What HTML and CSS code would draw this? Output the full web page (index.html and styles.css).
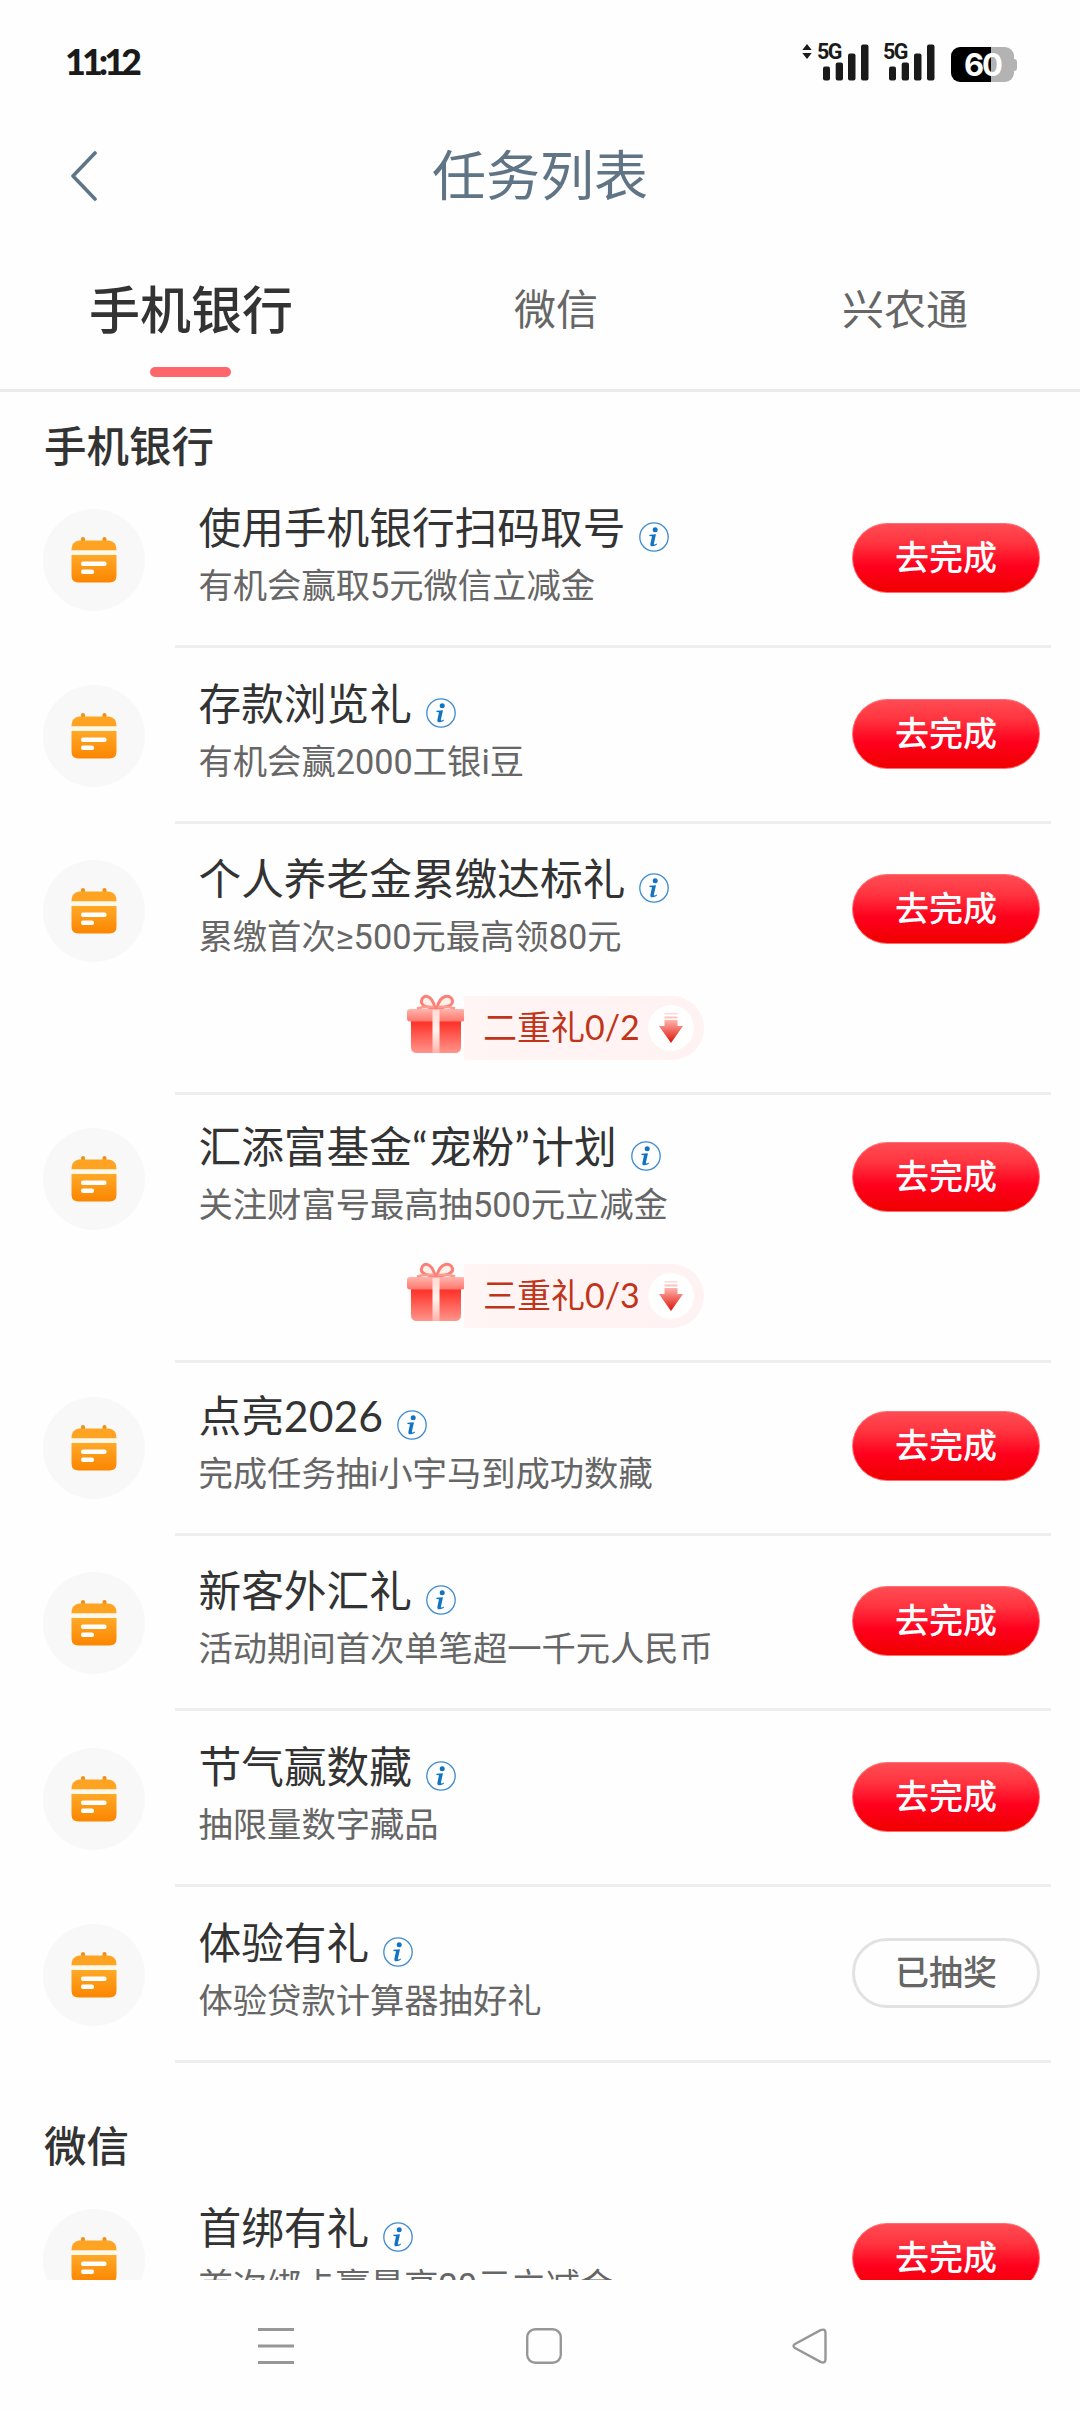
FILE: index.html
```html
<!DOCTYPE html>
<html lang="zh-CN">
<head>
<meta charset="utf-8">
<title>任务列表</title>
<link rel="stylesheet" href="styles.css">
</head>
<body>
<svg class="defs" width="0" height="0" aria-hidden="true">
  <defs>
    <linearGradient id="orange" x1="0" y1="0" x2="0" y2="1"><stop offset="0" stop-color="#ffa928"/><stop offset="1" stop-color="#fb8500"/></linearGradient>
    <linearGradient id="lid" x1="0" y1="0" x2="0" y2="1"><stop offset="0" stop-color="#ffb5ad"/><stop offset="1" stop-color="#ff766c"/></linearGradient>
    <linearGradient id="box" x1="0" y1="0" x2="0" y2="1"><stop offset="0" stop-color="#fb2f25"/><stop offset=".35" stop-color="#ff5148"/><stop offset="1" stop-color="#ff958b"/></linearGradient>
    <linearGradient id="ribbon" x1="0" y1="0" x2="0" y2="1"><stop offset="0" stop-color="#ffd9d2"/><stop offset=".5" stop-color="#fff3ef"/><stop offset="1" stop-color="#ffb3aa"/></linearGradient>
    <linearGradient id="down" x1="0" y1="0" x2="0" y2="1"><stop offset="0" stop-color="#ffb3ac"/><stop offset="1" stop-color="#dc1206"/></linearGradient>
  </defs>
  <symbol id="calendar" viewBox="0 0 46 46">
    <rect x="10" y="0" width="4" height="8" rx="2" fill="#ef8f1c"/><rect x="31.500" y="0" width="4" height="8" rx="2" fill="#ef8f1c"/>
    <path d="M8 3.500H38Q45.500 4.500 45.500 13.500H.500Q.500 4.500 8 3.500Z" fill="#ffa323"/>
    <path d="M.5 18H45.500V38.500Q45.500 45.500 38.500 45.500H7.500Q.5 45.500 .5 38.500Z" fill="url(#orange)"/>
    <rect x=".5" y="13.500" width="45" height="4.500" fill="#fff8e6"/>
    <rect x="10" y="24.500" width="25.500" height="4.600" rx="2" fill="#fff"/><rect x="10" y="32.500" width="13" height="4.600" rx="2" fill="#fff"/>
  </symbol>
  <symbol id="info" viewBox="0 0 30 30">
    <circle cx="15" cy="15" r="14.200" fill="none" stroke="#3d8ad0" stroke-width="1.300"/>
    <circle cx="16.200" cy="7.800" r="2.500" fill="#1173c4"/>
    <path d="M10.600 12.800L17 12.200L14.800 22Q14.700 23.200 18 21.600L17.600 23Q10.800 26.200 11.400 21.800L13 14.300L10.300 14Z" fill="#1173c4"/>
  </symbol>
  <symbol id="gift" viewBox="0 0 60 61">
    <path d="M5 27H55V53Q55 59 49 59H11Q5 59 5 53Z" fill="url(#box)"/>
    <rect x="1" y="15" width="58" height="12.500" rx="3" fill="url(#lid)"/>
    <rect x="26.500" y="15" width="7" height="44" fill="url(#ribbon)"/>
    <path d="M29 14C23 14 14 12 15.500 6.500C17 0 26 0 29 14ZM31 14C37 14 48 12 46.500 6.500C45 0 34 0 31 14Z" fill="#fff0ea" stroke="#fb8178" stroke-width="3"/>
    <path d="M28 13Q18 12 11 14.500M32 13Q42 12 49 14.500" fill="none" stroke="#fc9b91" stroke-width="2.500"/>
  </symbol>
  <symbol id="arrow" viewBox="0 0 24 32">
    <rect x="5.500" y="1" width="13" height="1.500" fill="#ffd9d5"/><rect x="5.500" y="4.500" width="13" height="2" fill="#ffc2bd"/>
    <path d="M5.500 8H18.500V14H24L12 31L0 14H5.500Z" fill="url(#down)"/>
  </symbol>
  <symbol id="signal" viewBox="0 0 46 36">
    <rect x="0" y="22" width="7" height="14" rx="2"/><rect x="12.700" y="18" width="7.300" height="18" rx="2"/><rect x="25" y="9" width="7.500" height="27" rx="2"/><rect x="38" y="0" width="7.500" height="36" rx="2"/>
  </symbol>
</svg>

<header class="status">
  <span class="clock">11:12</span>
  <div class="status-icons">
    <svg class="updown" viewBox="0 0 10 16"><path d="M5 0L10 6.300H0ZM5 16L10 9.700H0Z" fill="#1a1a1a"/></svg>
    <div class="cell"><span class="net">5G</span><svg class="bars"><use href="#signal"/></svg></div>
    <div class="cell"><span class="net">5G</span><svg class="bars"><use href="#signal"/></svg></div>
    <div class="battery"><span class="level">60</span></div><i class="nub"></i>
  </div>
</header>

<nav class="titlebar">
  <svg class="back" viewBox="0 0 28 50"><path d="M25 2L3 25L25 48" fill="none" stroke="#5f7485" stroke-width="3.600" stroke-linecap="round" stroke-linejoin="round"/></svg>
  <h1>任务列表</h1>
</nav>

<div class="tabs">
  <div class="tab active">手机银行</div>
  <div class="tab second">微信</div>
  <div class="tab third">兴农通</div>
</div>

<main class="content">
  <h2>手机银行</h2>
  <section class="list">
    <article class="item">
      <div class="row">
        <div class="icon"><svg><use href="#calendar"/></svg></div>
        <div class="copy"><h3>使用手机银行扫码取号<svg class="info"><use href="#info"/></svg></h3><p>有机会赢取5元微信立减金</p></div>
        <button class="btn">去完成</button>
      </div>
    </article>
    <article class="item">
      <div class="row">
        <div class="icon"><svg><use href="#calendar"/></svg></div>
        <div class="copy"><h3>存款浏览礼<svg class="info"><use href="#info"/></svg></h3><p>有机会赢2000工银i豆</p></div>
        <button class="btn">去完成</button>
      </div>
    </article>
    <article class="item rewarded">
      <div class="row">
        <div class="icon"><svg><use href="#calendar"/></svg></div>
        <div class="copy"><h3>个人养老金累缴达标礼<svg class="info"><use href="#info"/></svg></h3><p>累缴首次≥500元最高领80元</p></div>
        <button class="btn">去完成</button>
      </div>
      <div class="reward"><svg class="gift"><use href="#gift"/></svg><div class="pill"><span>二重礼0/2</span><b class="more"><svg><use href="#arrow"/></svg></b></div></div>
    </article>
    <article class="item rewarded">
      <div class="row">
        <div class="icon"><svg><use href="#calendar"/></svg></div>
        <div class="copy"><h3>汇添富基金<span class="quote">“</span>宠粉<span class="quote">”</span>计划<svg class="info"><use href="#info"/></svg></h3><p>关注财富号最高抽500元立减金</p></div>
        <button class="btn">去完成</button>
      </div>
      <div class="reward"><svg class="gift"><use href="#gift"/></svg><div class="pill"><span>三重礼0/3</span><b class="more"><svg><use href="#arrow"/></svg></b></div></div>
    </article>
    <article class="item">
      <div class="row">
        <div class="icon"><svg><use href="#calendar"/></svg></div>
        <div class="copy"><h3>点亮2026<svg class="info"><use href="#info"/></svg></h3><p>完成任务抽i小宇马到成功数藏</p></div>
        <button class="btn">去完成</button>
      </div>
    </article>
    <article class="item">
      <div class="row">
        <div class="icon"><svg><use href="#calendar"/></svg></div>
        <div class="copy"><h3>新客外汇礼<svg class="info"><use href="#info"/></svg></h3><p>活动期间首次单笔超一千元人民币</p></div>
        <button class="btn">去完成</button>
      </div>
    </article>
    <article class="item">
      <div class="row">
        <div class="icon"><svg><use href="#calendar"/></svg></div>
        <div class="copy"><h3>节气赢数藏<svg class="info"><use href="#info"/></svg></h3><p>抽限量数字藏品</p></div>
        <button class="btn">去完成</button>
      </div>
    </article>
    <article class="item">
      <div class="row">
        <div class="icon"><svg><use href="#calendar"/></svg></div>
        <div class="copy"><h3>体验有礼<svg class="info"><use href="#info"/></svg></h3><p>体验贷款计算器抽好礼</p></div>
        <button class="btn done">已抽奖</button>
      </div>
    </article>
  </section>
  <h2 class="next">微信</h2>
  <section class="list">
    <article class="item">
      <div class="row">
        <div class="icon"><svg><use href="#calendar"/></svg></div>
        <div class="copy"><h3>首绑有礼<svg class="info"><use href="#info"/></svg></h3><p>首次绑卡赢最高20元立减金</p></div>
        <button class="btn">去完成</button>
      </div>
    </article>
  </section>
</main>

<footer class="sysnav">
  <svg width="36" height="36" viewBox="0 0 36 36"><path d="M0 1.500H36M0 18H36M0 34.500H36" stroke="#979797" stroke-width="3"/></svg>
  <svg width="36" height="36" viewBox="0 0 36 36"><rect x="1.200" y="1.200" width="33.600" height="33.600" rx="8" fill="none" stroke="#979797" stroke-width="2.400"/></svg>
  <svg width="36" height="36" viewBox="0 0 36 36"><path d="M3 16L28.500 2.200Q33.500 .2 33.500 5V31Q33.500 36 28.500 33.800L3 20Q0 18 3 16Z" fill="none" stroke="#979797" stroke-width="2.400"/></svg>
</footer>
</body>
</html>
```
FILE: styles.css
```css
* { box-sizing: border-box; margin: 0; padding: 0; }
body {
  width: 1080px;
  height: 2412px;
  overflow: hidden;
  display: flex;
  flex-direction: column;
  background: #fefefe;
  color: #333;
  font-family: "Noto Sans CJK SC", sans-serif;
}
.defs { position: absolute; }
svg { display: block; }
h1, h2, h3 { font-weight: 400; }

.status {
  flex: none;
  height: 124px;
  padding: 44px 63px 0 65px;
  display: flex;
  justify-content: space-between;
}
.clock {
  font: 900 36px/34px Lato, sans-serif;
  color: #1a1a1a;
  letter-spacing: -4px;
}
.status-icons { display: flex; align-items: flex-start; }
.updown { width: 10px; height: 15px; margin-right: 5px; }
.cell { display: grid; width: 66px; }
.net, .bars { grid-area: 1 / 1; }
.net {
  font: 700 21.500px/16px Roboto, sans-serif;
  letter-spacing: -1.500px;
  color: #1a1a1a;
}
.bars { width: 46px; height: 37px; margin-left: 5.500px; fill: #1a1a1a; }
.battery {
  width: 63px;
  height: 35px;
  margin: 3px 0 0 2px;
  border-radius: 9px;
  background: linear-gradient(90deg, #000 63.5%, #b3b3b3 63.5%);
  display: flex;
  justify-content: center;
}
.level { font: 700 31px/35px Inter, sans-serif; letter-spacing: -2px; color: #fff; }
.nub { width: 3px; height: 12px; margin-top: 15px; border-radius: 0 3px 3px 0; background: #b3b3b3; }

.titlebar {
  flex: none;
  height: 102px;
  display: grid;
  grid-template-columns: 70px 1fr 70px;
  align-items: center;
}
.back { width: 28px; height: 50px; margin: 2px 0 0 70px; }
.titlebar h1 { text-align: center; font-size: 54px; line-height: 60px; padding-bottom: 5px; color: #5f7485; }

.tabs {
  flex: none;
  height: 166px;
  border-bottom: 3px solid #ebebeb;
  display: grid;
  grid-template-columns: 382px 348px 350px;
  justify-items: center;
  color: #666;
  font-size: 42px;
  line-height: 60px;
  padding-top: 51px;
}
.tab.active { color: #333; font-size: 51px; font-weight: 500; }
.tab.active::after {
  content: "";
  display: block;
  width: 81px;
  height: 10px;
  margin: 30px auto 0;
  border-radius: 5px;
  background: #ff666b;
}

.content { flex: none; height: 1888px; overflow: hidden; padding: 31px 0 0; }
h2 { font-size: 42.500px; line-height: 42px; font-weight: 500; margin: 0 0 43px 44px; }
h2.next { margin-top: 60px; }

.item { padding: 35.700px 0 0; }
.item:first-child { padding-top: 0; }
.rewarded + .item { padding-top: 32.500px; }
.item::after {
  content: "";
  display: block;
  height: 3px;
  margin: 39px 29px 0 175px;
  background: #eee;
}
.rewarded::after { margin-top: 31.600px; }
.row { display: flex; height: 98px; padding: 0 40px 0 43px; }
.icon {
  flex: none;
  width: 102px;
  height: 102px;
  margin: 1px 53.500px 0 0;
  border-radius: 50%;
  background: #f8f8f8;
  display: grid;
  place-items: center;
}
.icon svg { width: 46px; height: 46px; }
.copy { flex: 1; }
.copy h3 {
  display: flex;
  height: 42px;
  font-size: 42.700px;
  line-height: 40px;
  font-family: Lato, "Noto Sans CJK SC", sans-serif;
}
.quote { width: 17px; }
.info { flex: none; width: 30px; height: 30px; margin: 14px 0 0 14px; }
.copy p {
  margin-top: 15px;
  font-size: 34.300px;
  line-height: 42px;
  font-family: Roboto, "Noto Sans CJK SC", sans-serif;
  color: #666;
}
.btn {
  width: 188px;
  height: 70px;
  margin-top: 15px;
  padding-bottom: 4px;
  border: 1px solid #ff6d72;
  border-radius: 35px;
  background: linear-gradient(#ff4c54, #ff3540 28%, #ff001d 62%, #f00000);
  color: #fff;
  font: 500 34px/60px "Noto Sans CJK SC", sans-serif;
}
.btn.done { border: 3px solid #e2e2e2; background: #fefefe; color: #666; }

.reward { display: flex; height: 64px; margin: 39px 0 0 406px; }
.gift { width: 60px; height: 61px; margin-top: -2px; }
.pill {
  width: 240px;
  margin-left: -2px;
  padding: 0 10px 0 19px;
  display: flex;
  align-items: center;
  justify-content: space-between;
  border-radius: 0 32px 32px 0;
  background: linear-gradient(90deg, #fff5f4, #fff2f2);
  color: #c0351a;
  font: 34px/58px Lato, "Noto Sans CJK SC", sans-serif;
}
.pill span { padding-bottom: 3px; }
.more { width: 46px; height: 46px; border-radius: 50%; background: #fff; display: grid; place-items: center; }
.more svg { width: 24px; height: 32px; }

.sysnav {
  flex: none;
  display: flex;
  gap: 232px;
  padding: 48px 0 0 258px;
}
.sysnav svg:last-child { margin-left: -2px; }
```
